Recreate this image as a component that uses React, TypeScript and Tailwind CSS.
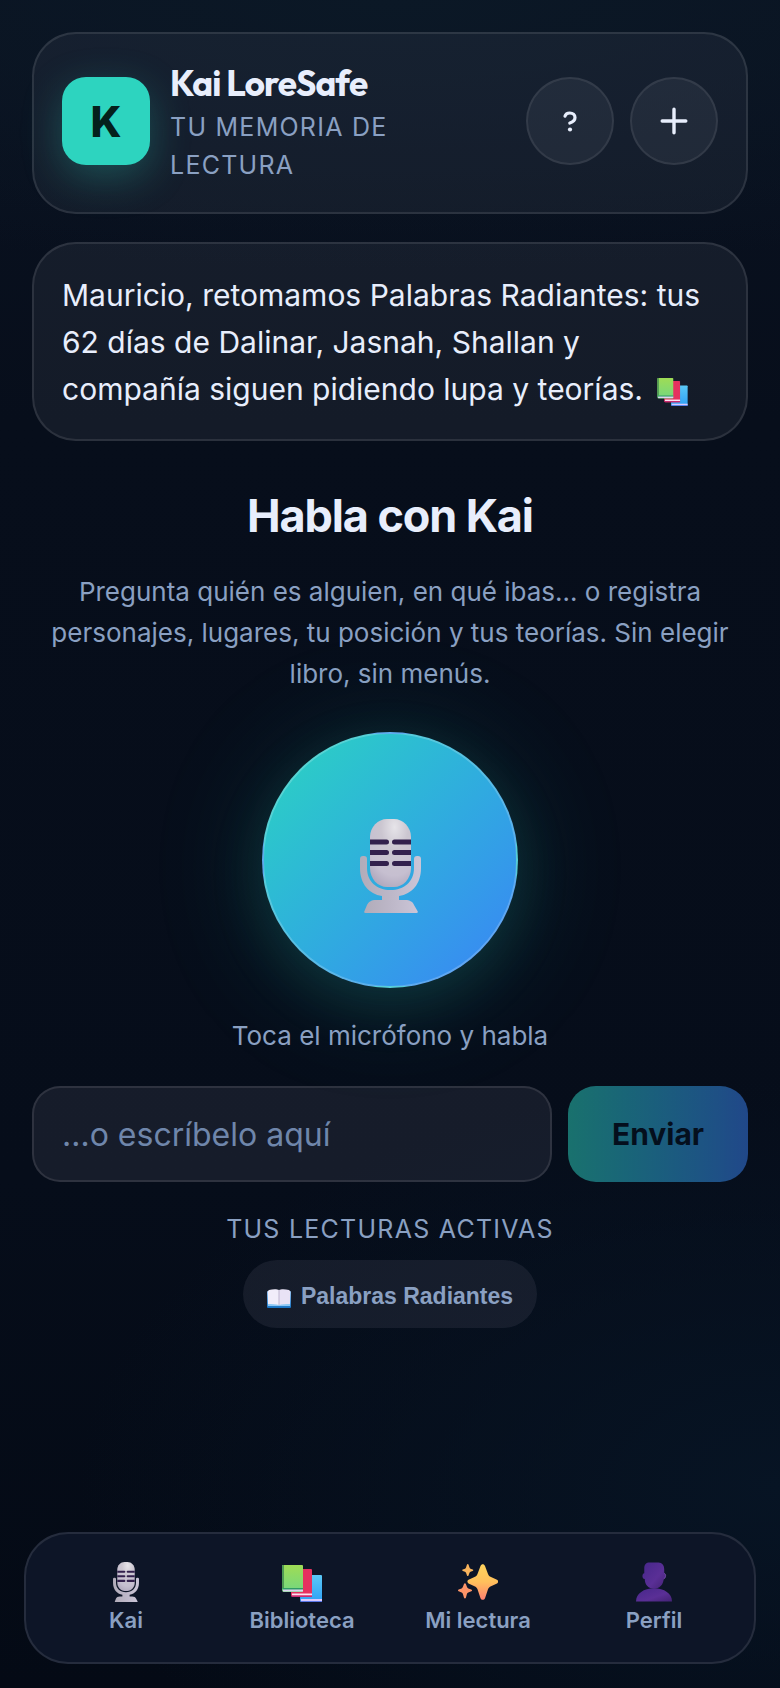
import React, { useState } from 'react';

type IconProps = { className?: string };

const MicIcon: React.FC<IconProps> = ({ className = '' }) => (
  <svg className={className} viewBox="0 0 61 94" aria-hidden="true">
    <defs>
      <radialGradient id="mic-body" cx="0.6" cy="0.12" r="0.95">
        <stop offset="0" stopColor="#e6e4e9" />
        <stop offset="0.35" stopColor="#cbc6d0" />
        <stop offset="0.75" stopColor="#c6bfd0" />
        <stop offset="1" stopColor="#aea6bb" />
      </radialGradient>
      <linearGradient id="mic-stand" x1="0" y1="0" x2="1" y2="0">
        <stop offset="0" stopColor="#b1acb9" />
        <stop offset="0.5" stopColor="#bdb7c8" />
        <stop offset="1" stopColor="#cbc5d7" />
      </linearGradient>
    </defs>
    <path
      d="M3 37h1a3 3 0 0 1 3 3v9c0 14 10 22 23.500 22S54 63 54 49v-9a3 3 0 0 1 3-3h1a3 3 0 0 1 3 3v9c0 16-9 26-22 28v5H22v-5C9 75 0 65 0 49v-9a3 3 0 0 1 3-3z"
      fill="url(#mic-stand)"
    />
    <path d="M16 81h29c5 0 8 2 9 5l3.500 6c.8 1.200.2 2-1 2h-51c-1.200 0-1.800-.8-1-2L7 86c1.500-3 4-5 9-5z" fill="url(#mic-stand)" />
    <path d="M27 0h7c9 0 17 8 17 18v31c0 11-8 19-17 19h-7c-9 0-17-8-17-19V18C10 8 18 0 27 0z" fill="url(#mic-body)" />
    <g fill="#32204c">
      <path d="M10 20.500h16.500a2.500 2.500 0 0 1 0 5H10zM51 20.500H34.500a2.500 2.500 0 0 0 0 5H51z" />
      <path d="M10 31h16.500a2.500 2.500 0 0 1 0 5H10zM51 31H34.500a2.500 2.500 0 0 0 0 5H51z" />
      <path d="M10 42h16.500a2.500 2.500 0 0 1 0 5H10zM51 42H34.500a2.500 2.500 0 0 0 0 5H51z" />
    </g>
  </svg>
);

const BooksIcon: React.FC<IconProps> = ({ className = '' }) => (
  <svg className={className} viewBox="0 0 40 37" aria-hidden="true">
    <defs>
      <linearGradient id="book-green" x1="0" y1="0" x2="0" y2="1">
        <stop offset="0" stopColor="#9fdc55" />
        <stop offset="1" stopColor="#74d77f" />
      </linearGradient>
      <linearGradient id="book-blue" x1="0" y1="0" x2="0" y2="1">
        <stop offset="0" stopColor="#5ac8f6" />
        <stop offset="1" stopColor="#2fa0f5" />
      </linearGradient>
    </defs>
    <path d="M19 10h20a1 1 0 0 1 1 1v25a1 1 0 0 1-1 1H20a2 2 0 0 1-2-2z" fill="url(#book-blue)" />
    <path d="M19 34h21v2H19z" fill="#d9c9ff" />
    <path d="M18 36h22v1H19z" fill="#5a78e8" />
    <path d="M9 4h20a1 1 0 0 1 1 1v26a1 1 0 0 1-1 1H11a2 2 0 0 1-2-2z" fill="#e5315f" />
    <path d="M10 28.500h20v2H10z" fill="#ffe0f2" />
    <path d="M9 30.500h21V32H10z" fill="#c92a70" />
    <path d="M1 0h19a1 1 0 0 1 1 1v25a1 1 0 0 1-1 1H2a2 2 0 0 1-2-2V1a1 1 0 0 1 1-1z" fill="url(#book-green)" />
    <path d="M0 1a1 1 0 0 1 1-1h1v23H0z" fill="#4f9a54" />
    <path d="M0 23h21v2H1z" fill="#2f9a66" />
    <path d="M1 24.500h20v2H1z" fill="#dcd6ef" />
  </svg>
);

const OpenBookIcon: React.FC<IconProps> = ({ className = '' }) => (
  <svg className={className} viewBox="0 0 24 19" aria-hidden="true">
    <defs>
      <linearGradient id="open-cover" x1="0" y1="0" x2="0" y2="1">
        <stop offset="0" stopColor="#9cc4ee" />
        <stop offset="1" stopColor="#1673c4" />
      </linearGradient>
    </defs>
    <path d="M1 2h22a1 1 0 0 1 1 1v15a1 1 0 0 1-1 1H1a1 1 0 0 1-1-1V3a1 1 0 0 1 1-1z" fill="url(#open-cover)" />
    <path d="M1 15h22v2H1z" fill="#8fc9f5" />
    <path d="M2 1c4-1 8-1 10 0v15c-3-1-7-1-11-1V2z" fill="#f1edfa" />
    <path d="M22 1c-4-1-8-1-10 0v15c3-1 7-1 11-1V2z" fill="#e8e2f5" />
    <path d="M12 1v15" stroke="#bdb4cf" strokeWidth="1" />
  </svg>
);

const SparklesIcon: React.FC<IconProps> = ({ className = '' }) => (
  <svg className={className} viewBox="0 0 40 36" aria-hidden="true">
    <defs>
      <linearGradient id="spark" x1="0" y1="0" x2="0" y2="1">
        <stop offset="0" stopColor="#ffd35c" />
        <stop offset="0.5" stopColor="#ffc05c" />
        <stop offset="1" stopColor="#ff8070" />
      </linearGradient>
    </defs>
    <path
      d="M22.500 2c1-2.500 3.500-2.500 4.500 0l3 8c.6 1.600 1.500 2.500 3 3l6 2.700c1.500.8 1.500 3 0 3.800l-6 2.700c-1.500.6-2.400 1.500-3 3l-3 9c-1 2-3.500 2-4.500 0l-3-9c-.6-1.500-1.500-2.400-3-3l-6-2.700c-1.500-.8-1.500-3 0-3.800l6-2.700c1.500-.5 2.400-1.400 3-3z"
      fill="url(#spark)"
    />
    <path d="M9 .6c.3-.8 1.200-.8 1.500 0l1 3c.2.600.5.900 1 1.100l2.200.9c.8.300.8 1 0 1.300l-2.200.9c-.5.200-.8.500-1 1l-1 2.600c-.3.800-1.200.8-1.500 0l-1-2.600c-.2-.5-.5-.8-1-1l-2.200-.9c-.8-.3-.8-1 0-1.300L7 4.700c.5-.2.800-.5 1-1.100z" fill="#f9b45c" />
    <path d="M6 20c.4-1 1.500-1 1.900 0l1.100 3c.2.700.6 1.100 1.300 1.400l3 1.200c1 .4 1 1.300 0 1.700l-3 1.200c-.7.300-1.100.7-1.300 1.300l-1.100 4c-.4 1-1.500 1-1.900 0l-1.200-4c-.2-.6-.6-1-1.200-1.300l-3-1.200c-.8-.4-.8-1.300 0-1.700l3-1.200c.6-.3 1-.7 1.200-1.400z" fill="#fd9468" />
  </svg>
);

const ProfileIcon: React.FC<IconProps> = ({ className = '' }) => (
  <svg className={className} viewBox="0 0 37 40" aria-hidden="true">
    <defs>
      <linearGradient id="bust" x1="0" y1="0" x2="1" y2="1">
        <stop offset="0" stopColor="#47278b" />
        <stop offset="0.6" stopColor="#5a2f96" />
        <stop offset="1" stopColor="#432274" />
      </linearGradient>
    </defs>
    <path d="M14 0h9c4 0 6 3 6 7v4c2 0 2 6-.5 6C28 23 24 27 18.500 27S9 23 9 17c-3 0-3-6-.5-6V6c0-4 2-6 5.500-6z" fill="url(#bust)" />
    <path d="M0 40c0-8 8-13.500 18.500-13.500S37 32 37 40z" fill="url(#bust)" />
    <path d="M29 11c2 1 2 4-.5 6" fill="none" stroke="#7d58b0" strokeWidth="0.8" />
  </svg>
);

const tabs = [
  { label: 'Kai', icon: <MicIcon className="h-10 w-[26px]" /> },
  { label: 'Biblioteca', icon: <BooksIcon className="mt-[3px] h-[37px] w-10" /> },
  { label: 'Mi lectura', icon: <SparklesIcon className="mt-0.5 h-9 w-10" /> },
  { label: 'Perfil', icon: <ProfileIcon className="h-10 w-9" /> },
];

const roundButton =
  'flex size-[88px] items-center justify-center rounded-full border-2 border-white/8 bg-[#f4e9ff]/6 text-[#e8eefc]';

const Header: React.FC = () => (
  <header className="flex items-center gap-5 rounded-[44px] border-2 border-white/10 bg-[#f4e9ff]/5 px-7 pt-6 pb-7">
    <div className="flex size-[88px] shrink-0 items-center justify-center rounded-3xl bg-[#2dd4bf] text-[42px] font-extrabold text-[#04211c] shadow-[0_12px_40px_rgba(45,212,191,0.28)]">
      K
    </div>
    <div className="min-w-0 flex-1">
      <h1 className="font-[Outfit,Lato,sans-serif] text-[35px] leading-[50px] font-bold tracking-tight">Kai LoreSafe</h1>
      <p className="max-w-[260px] text-[25px] leading-[38px] tracking-wider text-[#8aa0c2] uppercase">
        Tu memoria de lectura
      </p>
    </div>
    <div className="flex shrink-0 gap-4">
      <button type="button" className={roundButton} aria-label="Ayuda">
        <svg className="h-[21px] w-[14px]" viewBox="0 0 14 21" fill="none" aria-hidden="true">
          <path d="M2 5.200C2.600 3 4.600 2 6.800 2c3 0 5.200 1.800 5.200 4.600 0 3-2.200 4.600-5.200 5.400" stroke="currentColor" strokeWidth="3.200" strokeLinecap="round" />
          <circle cx="7" cy="18.500" r="2.100" fill="currentColor" />
        </svg>
      </button>
      <button type="button" className={roundButton} aria-label="Añadir">
        <svg className="size-7" viewBox="0 0 28 28" aria-hidden="true">
          <path d="M14 2.200v23.600M2.200 14h23.600" stroke="currentColor" strokeWidth="3.400" strokeLinecap="round" />
        </svg>
      </button>
    </div>
  </header>
);

const BottomNav: React.FC = () => (
  <nav className="mx-6 mt-auto mb-6 grid h-[132px] grid-cols-4 rounded-[44px] border-2 border-white/10 bg-[#0d1527] px-3 pt-7">
    {tabs.map((tab) => (
      <a key={tab.label} href="#" className="flex flex-col items-center text-[22px] leading-7 font-semibold text-[#8aa0c2]">
        <span className="flex h-11 items-start justify-center">{tab.icon}</span>
        {tab.label}
      </a>
    ))}
  </nav>
);

export default function App() {
  const [message, setMessage] = useState('');

  return (
    <div className="flex min-h-screen flex-col bg-[#060c19] bg-[radial-gradient(ellipse_130%_16%_at_50%_0%,#0b1826_0%,#0b182600_100%),radial-gradient(ellipse_90%_24%_at_100%_88%,#071424_0%,#07142400_100%),linear-gradient(#0a1221,#070e1b_25%,#060d1a_70%,#040a15)] font-[Inter,sans-serif] text-[#e8eefc]">
      <main className="flex flex-col px-8 pt-8">
        <Header />

        {/* Greeting */}
        <p className="mt-7 rounded-[44px] border-2 border-white/10 bg-[#f4e9ff]/6 px-7 pt-7 pb-[26px] text-[30px] leading-[47px]">
          Mauricio, retomamos Palabras Radiantes: tus 62 días de Dalinar, Jasnah, Shallan y compañía siguen pidiendo lupa y
          teorías. <BooksIcon className="ml-1.5 inline-block h-7 w-[31px]" />
        </p>

        {/* Voice */}
        <section className="flex flex-col items-center text-center">
          <h2 className="mt-12 text-[45px] leading-[54px] font-bold tracking-tight">Habla con Kai</h2>
          <p className="mt-7 text-[26px] leading-[41px] text-[#8aa0c2]">
            Pregunta quién es alguien, en qué ibas… o registra personajes, lugares, tu posición y tus teorías. Sin elegir
            libro, sin menús.
          </p>
          <button
            type="button"
            aria-label="Hablar"
            className="mt-[38px] flex size-64 items-center justify-center rounded-full border-2 border-white/20 bg-linear-135 from-[#2dd4bf] to-[#3b82f6] pt-3 shadow-[0_16px_56px_rgba(45,212,191,0.13),0_8px_120px_rgba(45,212,191,0.16)]"
          >
            <MicIcon className="h-[94px] w-[61px]" />
          </button>
          <p className="mt-7 text-[26px] leading-10 text-[#8aa0c2]">Toca el micrófono y habla</p>
        </section>

        {/* Text input */}
        <form className="mt-[30px] flex gap-4" onSubmit={(e) => e.preventDefault()}>
          <input
            type="text"
            aria-label="Mensaje"
            value={message}
            onChange={(e) => setMessage(e.target.value)}
            placeholder="…o escríbelo aquí"
            className="h-24 min-w-0 flex-1 rounded-[28px] border-2 border-white/10 bg-[#f4e9ff]/7 px-7 text-[32px] placeholder:text-[#6f86ab]"
          />
          <button
            type="submit"
            disabled={!message}
            className="w-[180px] rounded-[28px] bg-linear-to-r from-[#2dd4bf] to-[#3b82f6] text-[30px] font-bold text-[#04101f] disabled:opacity-50"
          >
            Enviar
          </button>
        </form>

        {/* Active readings */}
        <section className="flex flex-col items-center">
          <h3 className="mt-7 text-[25px] leading-[38px] tracking-wider text-[#8aa0c2] uppercase">Tus lecturas activas</h3>
          <button
            type="button"
            className="mt-3 flex h-[68px] items-center gap-2.5 rounded-full bg-[#f4e9ff]/7 px-6 pt-1 font-['Liberation_Sans',Arial,sans-serif] text-[23px] font-bold text-[#8aa0c2]"
          >
            <OpenBookIcon className="mt-1 h-[19px] w-6" />
            Palabras Radiantes
          </button>
        </section>
      </main>
      <BottomNav />
    </div>
  );
}
